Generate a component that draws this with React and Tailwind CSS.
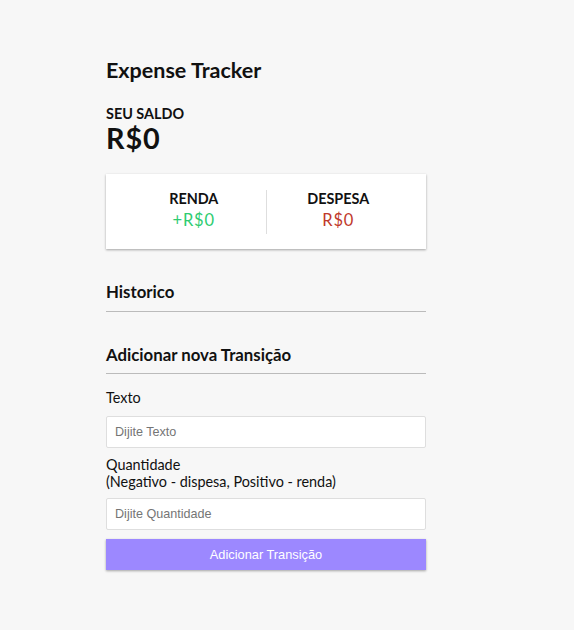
const App = () => {
    // Sample values for empty state
    const balance = 0;
    const income = 0;
    const expense = 0;

    return (
        <div className="min-h-screen bg-[#f7f7f7] font-['Lato',sans-serif] text-[#111]">
            <div className="w-[320px] ml-[106px] pt-[57px] pb-10">
                <h2 className="text-[21.5px] leading-[26px] font-bold">Expense Tracker</h2>

                <h4 className="mt-[22px] text-[14.4px] leading-[17px] font-bold uppercase">Seu Saldo</h4>
                <h1 className="text-[28.8px] leading-[33px] font-bold tracking-[0.9px]">R${balance}</h1>

                <div className="mt-[19px] bg-white pt-4 pb-[15px] px-4 flex shadow-[0_1px_3px_rgba(0,0,0,0.12),0_1px_2px_rgba(0,0,0,0.24)]">
                    <div className="flex-1 text-center border-r border-[#dedede]">
                        <h4 className="text-[14.4px] leading-[17px] font-bold uppercase">Renda</h4>
                        <p className="my-[3px] text-[16.5px] leading-[21px] tracking-[0.8px] text-[#2ecc71]">+R${income}</p>
                    </div>
                    <div className="flex-1 text-center">
                        <h4 className="text-[14.4px] leading-[17px] font-bold uppercase">Despesa</h4>
                        <p className="my-[3px] text-[16.5px] leading-[21px] tracking-[0.8px] text-[#c0392b]">R${expense}</p>
                    </div>
                </div>

                <h3 className="mt-[33px] text-[16.8px] leading-[20px] font-bold pb-[9px] border-b border-[#bbb]">Historico</h3>
                <ul className="list-none"></ul>

                <h3 className="mt-[33px] text-[16.8px] leading-[20px] font-bold pb-[8px] border-b border-[#bbb]">Adicionar nova Transição</h3>

                <form onSubmit={(e) => e.preventDefault()}>
                    <div className="mt-[15px]">
                        <label className="block text-[14.4px] leading-[17px]">Texto</label>
                        <input
                            type="text"
                            placeholder="Dijite Texto"
                            className="mt-[10px] block w-full h-[32px] bg-white border border-[#dedede] rounded-[2px] px-2 text-[12.6px] font-['Liberation_Sans',Arial,sans-serif] placeholder:text-[#757575] outline-none"
                        />
                    </div>
                    <div className="mt-[8px]">
                        <label className="block text-[14.4px] leading-[17px]">
                            Quantidade <br />
                            (Negativo - dispesa, Positivo - renda)
                        </label>
                        <input
                            type="number"
                            placeholder="Dijite Quantidade"
                            className="mt-[8px] block w-full h-[32px] bg-white border border-[#dedede] rounded-[2px] px-2 text-[12.6px] font-['Liberation_Sans',Arial,sans-serif] placeholder:text-[#757575] outline-none"
                        />
                    </div>
                    <button className="mt-[9px] block w-full h-[31px] bg-[#9c88ff] text-white text-[12.8px] font-['Liberation_Sans',Arial,sans-serif] shadow-[0_1px_3px_rgba(0,0,0,0.12),0_1px_2px_rgba(0,0,0,0.24)]">
                        Adicionar Transição
                    </button>
                </form>
            </div>
        </div>
    );
};

export default App;
